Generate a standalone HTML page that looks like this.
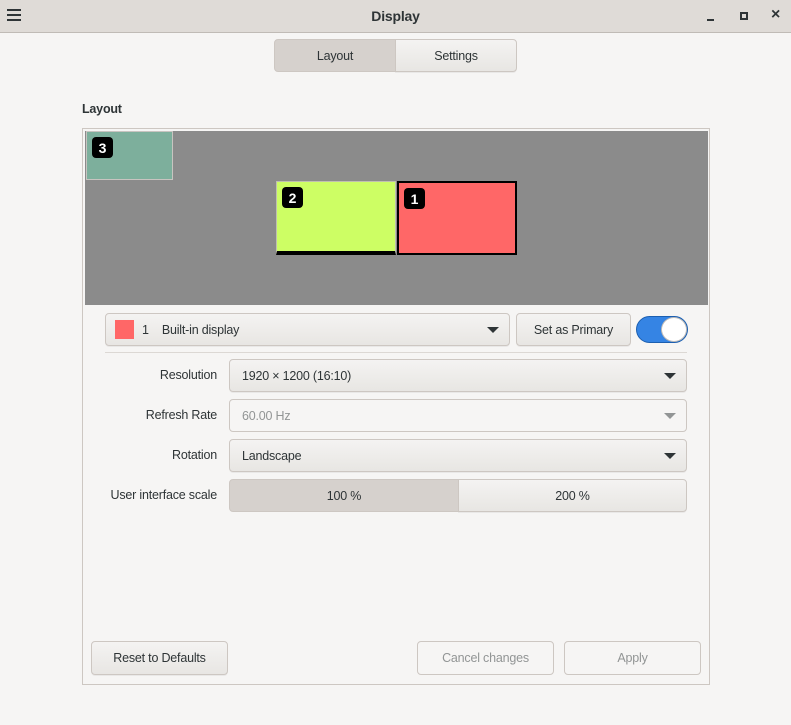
<!DOCTYPE html>
<html><head><meta charset="utf-8"><style>
*{box-sizing:border-box;margin:0;padding:0}
body{width:791px;height:725px;background:#f6f5f4;font-family:"Liberation Sans",sans-serif;font-size:12.5px;letter-spacing:-0.2px;color:#2e3436;position:relative;overflow:hidden}
.a{position:absolute}
.btn{position:absolute;border:1px solid #cdc7c2;border-radius:4px;background:linear-gradient(#f4f3f2,#e8e6e3);display:flex;align-items:center;justify-content:center;box-shadow:0 1px 0 rgba(0,0,0,0.05)}
.dis{background:#f6f5f4;color:#929595;box-shadow:none}
.combo{justify-content:flex-start;padding-left:12px}
.arr{position:absolute;right:10px;top:13px;width:0;height:0;border-left:6px solid transparent;border-right:6px solid transparent;border-top:6px solid #2e3436}
.lbl{position:absolute;text-align:right;width:200px;left:17px}
.num{position:absolute;background:#000;color:#fff;font-weight:bold;font-size:14px;width:21px;height:21px;border-radius:4px;display:flex;align-items:center;justify-content:center;letter-spacing:0}
</style></head><body>
<div class="a" style="left:0;top:0;width:791px;height:33px;background:#dfdbd7;border-bottom:1px solid #c0bbb6"></div>
<div class="a" style="left:7px;top:9px;width:14px;height:2px;background:#2e3436"></div>
<div class="a" style="left:7px;top:14px;width:14px;height:2px;background:#2e3436"></div>
<div class="a" style="left:7px;top:19px;width:14px;height:2px;background:#2e3436"></div>
<div class="a" style="left:0;top:8px;width:791px;text-align:center;font-weight:bold;font-size:14px">Display</div>
<div class="a" style="left:707px;top:19px;width:7px;height:2px;background:#2e3436"></div>
<div class="a" style="left:740px;top:12px;width:8px;height:8px;border:2px solid #2e3436"></div>
<div class="a" style="left:771px;top:6px;font-size:16px;font-weight:bold">×</div>

<div class="btn" style="left:274px;top:39px;width:122px;height:33px;border-radius:4px 0 0 4px;background:#d6d1cd;box-shadow:none">Layout</div>
<div class="btn" style="left:395px;top:39px;width:122px;height:33px;border-radius:0 4px 4px 0">Settings</div>

<div class="a" style="left:82px;top:102px;font-weight:bold">Layout</div>
<div class="a" style="left:82px;top:128px;width:628px;height:557px;border:1px solid #cdc7c2"></div>
<div class="a" style="left:85px;top:131px;width:623px;height:174px;background:#8b8b8b"></div>
<div class="a" style="left:86px;top:131px;width:87px;height:49px;background:#7daf9c;border:1px solid #c8c4c0"></div>
<div class="num" style="left:92px;top:137px">3</div>
<div class="a" style="left:276px;top:181px;width:120px;height:74px;background:#cdfe64;border:1px solid #c0c0b0;border-bottom:4px solid #000"></div>
<div class="num" style="left:282px;top:187px">2</div>
<div class="a" style="left:397px;top:181px;width:120px;height:74px;background:#ff6767;border:2px solid #000"></div>
<div class="num" style="left:404px;top:188px">1</div>

<div class="btn combo" style="left:105px;top:313px;width:405px;height:33px"><span style="display:inline-block;width:19px;height:19px;background:#ff6767;margin-right:8px;margin-left:-3px"></span>1&nbsp;&nbsp;&nbsp;&nbsp;Built-in display<span class="arr"></span></div>
<div class="btn" style="left:516px;top:313px;width:115px;height:33px">Set as Primary</div>
<div class="a" style="left:636px;top:316px;width:52px;height:27px;border-radius:14px;background:#3584e4;border:1px solid #1c5fb0"></div>
<div class="a" style="left:661px;top:317px;width:26px;height:25px;border-radius:50%;background:#fff;border:1px solid #c0bbb6"></div>
<div class="a" style="left:105px;top:352px;width:582px;height:1px;background:#dcd8d4"></div>

<div class="lbl" style="top:368px">Resolution</div>
<div class="btn combo" style="left:229px;top:359px;width:458px;height:33px">1920 × 1200 (16:10)<span class="arr"></span></div>
<div class="lbl" style="top:408px">Refresh Rate</div>
<div class="btn combo dis" style="left:229px;top:399px;width:458px;height:33px">60.00 Hz<span class="arr" style="border-top-color:#929595"></span></div>
<div class="lbl" style="top:448px">Rotation</div>
<div class="btn combo" style="left:229px;top:439px;width:458px;height:33px">Landscape<span class="arr"></span></div>
<div class="lbl" style="top:488px">User interface scale</div>
<div class="btn" style="left:229px;top:479px;width:230px;height:33px;border-radius:4px 0 0 4px;background:#d6d1cd;box-shadow:none">100 %</div>
<div class="btn" style="left:458px;top:479px;width:229px;height:33px;border-radius:0 4px 4px 0">200 %</div>

<div class="btn" style="left:91px;top:641px;width:137px;height:34px">Reset to Defaults</div>
<div class="btn dis" style="left:417px;top:641px;width:137px;height:34px">Cancel changes</div>
<div class="btn dis" style="left:564px;top:641px;width:137px;height:34px">Apply</div>
</body></html>
